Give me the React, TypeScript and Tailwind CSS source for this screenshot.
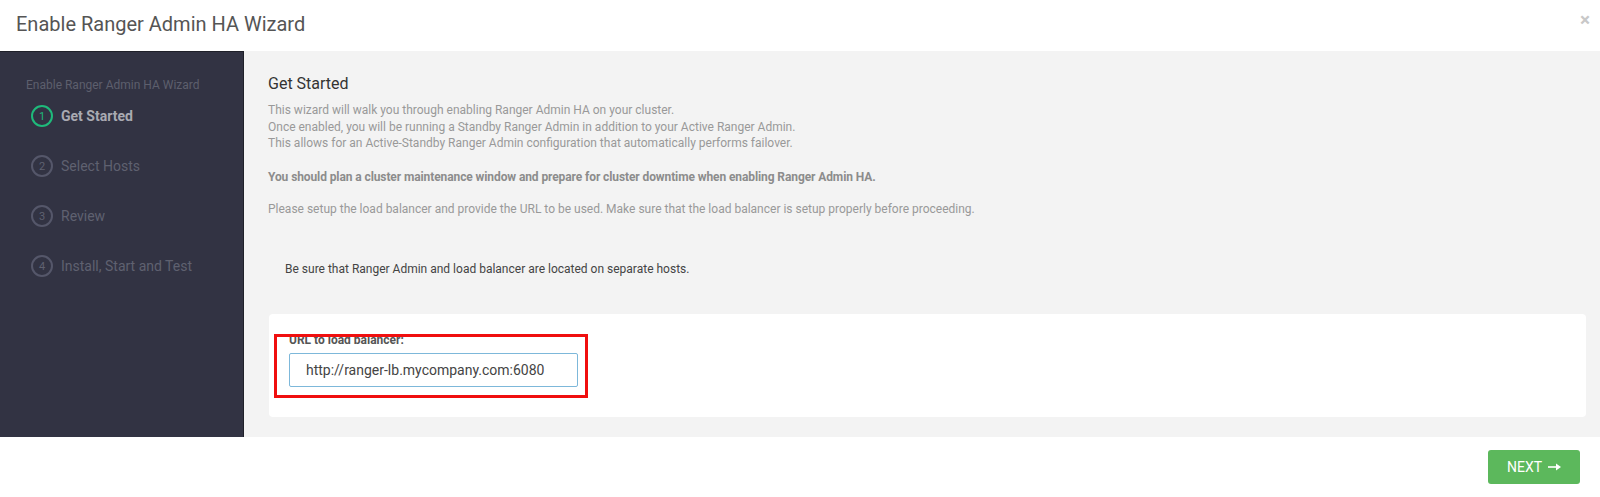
import React from 'react';

const steps = ['Get Started', 'Select Hosts', 'Review', 'Install, Start and Test'];

const App = () => {
  return (
    <div className="w-[1600px] h-[497px] bg-white flex flex-col font-['Roboto',sans-serif]">
      {/* header */}
      <div className="h-[51px] flex items-center justify-between pl-4 pr-[10px]">
        <h1 className="text-[20px] leading-6 text-[#555] -mt-[4px]">Enable Ranger Admin HA Wizard</h1>
        <span className="text-[19px] leading-none font-bold text-[#c8c8c8] -mt-[12px]">×</span>
      </div>

      <div className="flex h-[386px]">
        {/* sidebar */}
        <div className="w-[244px] shrink-0 bg-[#323343] border-r border-t border-[#1f2029] pt-[25px] pl-[26px]">
          <div className="text-[12px] leading-4 text-[#5d5f6d]">Enable Ranger Admin HA Wizard</div>
          <ul className="mt-[12px] flex flex-col gap-[28px]">
            {steps.map((s, i) => {
              const active = i === 0;
              return (
                <li key={s} className="flex items-center gap-2 pl-[5px]">
                  <span
                    className={`w-[22px] h-[22px] rounded-full border-2 flex items-center justify-center text-[11px] leading-none ${
                      active ? 'border-[#1fba7b] text-[#1fba7b]' : 'border-[#55576a] text-[#5f6170]'
                    }`}
                  >
                    {i + 1}
                  </span>
                  <span
                    className={`text-[14px] leading-5 ${
                      active ? 'font-bold text-[#a9aab2]' : 'text-[#5f6170]'
                    }`}
                  >
                    {s}
                  </span>
                </li>
              );
            })}
          </ul>
        </div>

        {/* content */}
        <div className="flex-1 bg-[#f3f3f3] pl-6 pr-[14px] pt-[23px]">
          <h2 className="text-[16px] leading-5 text-[#333]">Get Started</h2>
          <div className="mt-2 text-[12px] leading-[16.5px] text-[#999]">
            <p>This wizard will walk you through enabling Ranger Admin HA on your cluster.</p>
            <p>Once enabled, you will be running a Standby Ranger Admin in addition to your Active Ranger Admin.</p>
            <p>This allows for an Active-Standby Ranger Admin configuration that automatically performs failover.</p>
            <p className="mt-[17px] font-bold text-[#8c8c8c] tracking-[-0.1px]">
              You should plan a cluster maintenance window and prepare for cluster downtime when enabling Ranger Admin HA.
            </p>
            <p className="mt-[16px]">
              Please setup the load balancer and provide the URL to be used. Make sure that the load balancer is setup properly before proceeding.
            </p>
          </div>
          <div className="mt-[43px] pl-[17px] text-[12px] leading-[16.5px] text-[#444]">
            Be sure that Ranger Admin and load balancer are located on separate hosts.
          </div>

          <div className="relative mt-[37px] ml-px h-[103px] bg-white rounded-[4px] pl-5 pt-[19px]">
            <label className="block text-[12px] leading-[14px] font-bold text-[#555]">URL to load balancer:</label>
            <input
              type="text"
              readOnly
              value="http://ranger-lb.mycompany.com:6080"
              className="mt-[6px] w-[289px] h-[34px] px-4 border border-[#7db8da] rounded-[2px] text-[14px] text-[#444] outline-none font-['Roboto',sans-serif]"
            />
            <div className="absolute left-[5px] top-[20px] w-[314px] h-[64px] border-[3px] border-[#f00f0f] pointer-events-none" />
          </div>
        </div>
      </div>

      {/* footer */}
      <div className="flex-1 flex items-center justify-end pr-5">
        <button className="w-[92px] h-[34px] bg-[#5cb85c] rounded-[3px] text-white text-[14px] leading-none flex items-center justify-center gap-[6px]">
          NEXT
          <svg width="13" height="8" viewBox="0 0 13 8" fill="white">
            <rect x="0" y="3.2" width="9" height="1.6" />
            <path d="M8 0.5 L13 4 L8 7.5 Z" />
          </svg>
        </button>
      </div>
    </div>
  );
};

export default App;
